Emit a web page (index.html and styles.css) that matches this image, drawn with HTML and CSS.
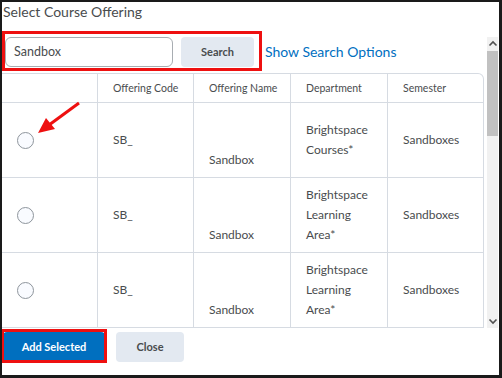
FILE: index.html
```html
<!DOCTYPE html>
<html>
<head>
<meta charset="utf-8">
<link rel="stylesheet" href="styles.css">
</head>
<body>
<div class="frame">
  <div class="title">Select Course Offering</div>
  <div class="main">
    <div class="content">
      <div class="search-row">
        <div class="input">Sandbox</div>
        <div class="btn btn-light">Search</div>
        <a class="link">Show Search Options</a>
      </div>
      <table class="grid">
        <colgroup>
          <col class="c1"><col class="c2"><col class="c3"><col class="c4"><col class="c5">
        </colgroup>
        <thead>
          <tr><th></th><th>Offering Code</th><th>Offering Name</th><th>Department</th><th class="last">Semester</th></tr>
        </thead>
        <tbody>
          <tr>
            <td><span class="radio"></span></td>
            <td>SB_</td>
            <td class="bottom">Sandbox</td>
            <td>Brightspace<br>Courses*</td>
            <td class="last">Sandboxes</td>
          </tr>
          <tr>
            <td><span class="radio"></span></td>
            <td>SB_</td>
            <td class="bottom">Sandbox</td>
            <td>Brightspace<br>Learning<br>Area*</td>
            <td class="last">Sandboxes</td>
          </tr>
          <tr>
            <td><span class="radio"></span></td>
            <td>SB_</td>
            <td class="bottom">Sandbox</td>
            <td>Brightspace<br>Learning<br>Area*</td>
            <td class="last">Sandboxes</td>
          </tr>
        </tbody>
      </table>
    </div>
    <div class="scrollbar">
      <div class="sb-arrow">
        <svg width="10" height="8" viewBox="0 0 10 8"><path d="M1.5 5.5 L5 2 L8.5 5.5" fill="none" stroke="#505050" stroke-width="1.6"/></svg>
      </div>
      <div class="sb-track"><div class="sb-thumb"></div></div>
      <div class="sb-arrow">
        <svg width="10" height="8" viewBox="0 0 10 8"><path d="M1.5 2.5 L5 6 L8.5 2.5" fill="none" stroke="#505050" stroke-width="1.6"/></svg>
      </div>
    </div>
  </div>
  <div class="footer">
    <div class="btn btn-primary">Add Selected</div>
    <div class="btn btn-light btn-close">Close</div>
  </div>
  <div class="mark mark-search"></div>
  <div class="mark mark-add"></div>
  <svg class="arrow" width="502" height="378" viewBox="0 0 502 378">
    <line x1="79" y1="103" x2="49" y2="125" stroke="#ee1010" stroke-width="3"/>
    <polygon points="38,133 46,118 55,129" fill="#ee1010"/>
  </svg>
</div>
</body>
</html>
```

FILE: styles.css
```css
* { box-sizing: border-box; }
html, body { margin: 0; padding: 0; background: #fff; }
body {
  width: 502px;
  height: 378px;
  font-family: Lato, "Noto Sans", sans-serif;
  color: #494c4e;
}
.frame {
  position: relative;
  width: 502px;
  height: 378px;
  border-style: solid;
  border-color: #1a1a1a;
  border-width: 2px 3px 3px 2px;
  display: flex;
  flex-direction: column;
  overflow: hidden;
}
.title {
  height: 33px;
  padding: 0 0 0 1px;
  font-size: 14px;
  line-height: 20px;
  color: #494c4e;
}
.main {
  height: 295px;
  display: flex;
}
.content {
  width: 482px;
  overflow: hidden;
}
.search-row {
  display: flex;
  align-items: flex-start;
  padding: 2px 0 0 3px;
  height: 38px;
}
.input {
  width: 168px;
  height: 30px;
  border: 1px solid #a8adb2;
  border-radius: 6px;
  padding: 0 0 0 8px;
  font-size: 12.5px;
  line-height: 28px;
  color: #494c4e;
}
.btn {
  height: 30px;
  border-radius: 4px;
  font-size: 11px;
  font-weight: bold;
  line-height: 30px;
  text-align: center;
}
.btn-light {
  background: #e3e9f1;
  color: #494c4e;
}
.search-row .btn-light {
  width: 73px;
  margin-left: 8px;
}
.link {
  margin-left: 11px;
  font-size: 14px;
  line-height: 30px;
  color: #006fbf;
}
.grid {
  width: 482px;
  table-layout: fixed;
  border-collapse: separate;
  border-spacing: 0;
  font-size: 12px;
}
.c1 { width: 96px; }
.c2 { width: 96px; }
.c3 { width: 97px; }
.c4 { width: 97px; }
.c5 { width: 96px; }
.grid th, .grid td {
  border-right: 1px solid #d6dbe2;
  border-bottom: 1px solid #d6dbe2;
  text-align: left;
  padding: 0 0 0 15px;
}
.grid th {
  border-top: 1px solid #d6dbe2;
  height: 30px;
  font-size: 10.5px;
  font-weight: normal;
  line-height: 20px;
  padding-top: 4px;
  padding-bottom: 4px;
}
.grid th.last { border-top-right-radius: 6px; }
.grid td {
  height: 75px;
  line-height: 20px;
  padding-top: 7px;
  padding-bottom: 7px;
  vertical-align: middle;
}
.grid td.bottom { vertical-align: bottom; }
.radio {
  display: block;
  width: 17px;
  height: 17px;
  border: 1px solid #8e959c;
  border-radius: 50%;
  background: #f9fbff;
}
.scrollbar {
  width: 11px;
  margin: 2px 0 2px 3px;
  background: #f1f1f1;
  display: flex;
  flex-direction: column;
}
.sb-arrow {
  height: 14px;
  display: flex;
  align-items: center;
  justify-content: center;
}
.sb-track { flex: 1; }
.sb-thumb {
  height: 85px;
  background: #c1c1c1;
}
.footer {
  flex: 1;
  display: flex;
  align-items: flex-start;
  padding: 2px 0 0 1px;
}
.btn-primary {
  width: 102px;
  background: #006fbf;
  color: #fff;
}
.btn-close {
  width: 68px;
  margin-left: 11px;
}
.mark {
  position: absolute;
  border: 3px solid #ee1010;
}
.mark-search { left: 0; top: 29px; width: 260px; height: 40px; }
.mark-add { left: -1px; top: 327px; width: 106px; height: 34px; }
.arrow {
  position: absolute;
  left: -2px;
  top: -2px;
  pointer-events: none;
}
```
